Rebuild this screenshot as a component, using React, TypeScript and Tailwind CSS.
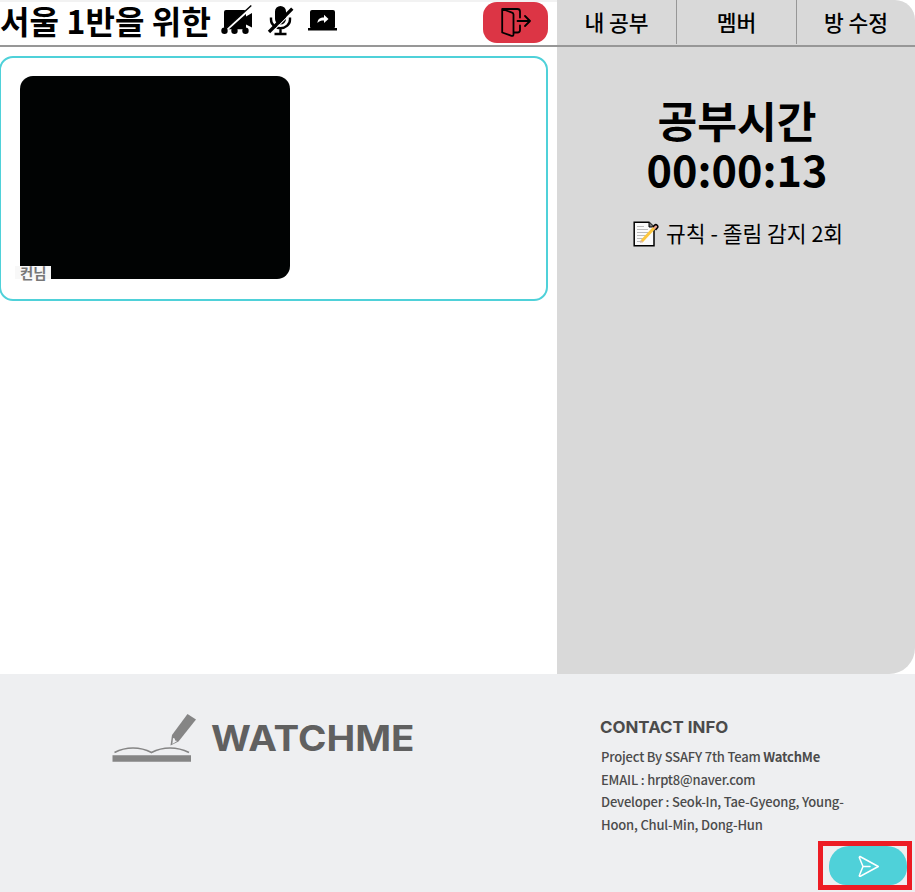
import React from "react";

function CameraOff() {
  return (
    <svg className="block h-[32px] w-[34px]" viewBox="0 0 34 32">
      <path d="M5 5h18Q25 5 25 7v4.500L31 8v14.500l-6-3v3q0 1.800-2 1.800H5Q3 24.300 3 22.300V7Q3 5 5 5Z" />
      <path d="M4 26 31 1.800" stroke="white" strokeWidth="2.600" />
      <path d="M3.500 25 30.300 .500" stroke="black" strokeWidth="1.400" />
      <circle cx="3.500" cy="25.700" r="3.200" />
      <circle cx="13.500" cy="25.700" r="3.200" />
      <circle cx="24.500" cy="25.700" r="3.200" />
    </svg>
  );
}

function MicOff() {
  return (
    <svg className="block h-[32px] w-[28px]" viewBox="0 0 28 32" fill="none" stroke="black">
      <path d="M13.500 1a5.500 5.500 0 0 1 5.500 5.500V14a5.500 5.500 0 0 1-11 0V6.500A5.500 5.500 0 0 1 13.500 1Z" fill="black" stroke="none" />
      <path d="M4 12.500v2c0 5 4.200 8.700 9.500 8.700s9.500-3.700 9.500-8.700v-2M13.500 23v5.500M7.500 29h12" strokeWidth="2.400" />
      <path d="M3.800 28.300 27.300 4.800" stroke="white" strokeWidth="1.200" />
      <path d="M2 27 25.300 3.700" strokeWidth="3.300" />
    </svg>
  );
}

function ShareScreen() {
  return (
    <svg className="block h-[21px] w-[29px]" viewBox="0 0 29 21">
      <path d="M4 0h21q2 0 2 2v15q0 1-1 1H3q-1 0-1-1V2Q2 0 4 0ZM0 18h29v2.500H0Z" />
      <path d="M9.500 13c.2-4 2.500-5.500 6.500-5.500V4.700l4.500 4.200-4.500 4V10.500c-3 0-4.800.600-6.500 2.500Z" fill="white" />
    </svg>
  );
}

function Door() {
  return (
    <svg className="block h-[30px] w-[30px]" viewBox="0 0 30 30" fill="none" stroke="black" strokeWidth="1.800" strokeLinejoin="round" strokeLinecap="round">
      <path d="M1.200 1v23.500l9.300 3.300q2 .600 2-1.500V6.500q0-1.400-1.400-1.900L1.200 1H16.500Q19 1 19 3.500v6M13 24.500h3.500q2.500 0 2.500-2.500V17.500M16.500 13h12.500M24 8l5 5-5 5" />
    </svg>
  );
}

function Memo() {
  return (
    <svg className="block h-[26px] w-[26px]" viewBox="0 0 26 26">
      <path d="M1.200 1.200H16L21 6v18.700H1.200Z" fill="#fafafa" stroke="black" strokeWidth="1.500" />
      <path d="M16 1v5h5" fill="#777" stroke="black" />
      <path d="M4 5.500h7M4 8.500h11M4 11.500h11M4 14.500h9M4 17.500h6M4 20.500h4" stroke="#bbb" />
      <path d="m8.500 20.500 13-14" stroke="#fcc63d" strokeWidth="3" />
      <path d="m7 22 1-3 2.200 2Z" fill="#d7b6a2" />
      <path d="m20 6 1.500-1.700q1.300-1.300 2.700 0t0 2.700L22.500 9" fill="#eaa08b" stroke="black" strokeWidth="1.500" />
    </svg>
  );
}

function BookLogo() {
  return (
    <svg className="block h-[50px] w-[86px]" viewBox="0 0 86 50">
      <path d="M.500 42.300h78.500V48.700H.500Z" fill="#858585" />
      <path d="M2.500 39.500C14 33.500 28 33.500 39.500 39.500 51 33.500 65 33.500 77 39.500" fill="none" stroke="#858585" strokeWidth="1.600" />
      <path d="M75.500 1 84 6.500 66.500 28.500 58.500 32.500 60 22Z" fill="#858585" />
      <path d="m61 25 1.700.400.500 2 2 .600-4.800 3Z" fill="#eeeff1" />
    </svg>
  );
}

const tabs = [
  { label: "내 공부", cell: "w-[120px] border-r border-[#979797]" },
  { label: "멤버", cell: "w-[120px] border-r border-[#979797]" },
  { label: "방 수정", cell: "w-[118px]" },
];

export default function App() {
  return (
    <div className="relative flex h-[892px] w-[915px] flex-col overflow-hidden bg-white font-['Noto_Sans_CJK_KR',sans-serif] text-black">
      <main className="flex h-[674px]">
        <section className="w-[557px]">
          <header className="flex h-[47px] items-start border-t-2 border-b-2 border-t-[#f2f2f2] border-b-[#979797]">
            <h1 className="mt-[-5px] w-[221px] text-[32px] leading-[46px] font-bold tracking-[0.1px] whitespace-nowrap">서울 1반을 위한</h1>
            <div className="mt-[3px]"><CameraOff /></div>
            <div className="mt-[3px] ml-[12px]"><MicOff /></div>
            <div className="mt-[8px] ml-[13px]"><ShareScreen /></div>
            <button className="ml-auto mr-[9px] flex h-[41px] w-[65px] items-center justify-center rounded-[14px] bg-[#dc3545]">
              <Door />
            </button>
          </header>
          <div className="mt-[9px] -ml-px h-[245px] w-[549px] rounded-[14px] border-2 border-[#4fd1d9] pt-[18px] pl-[19px]">
            <div className="flex h-[203px] w-[270px] items-end rounded-[13px] bg-[#010303]">
              <div className="-ml-[5px] h-[13px] w-[36px] bg-[#f8f8f8] pl-[5px] text-[14.400px] leading-[14px] font-bold whitespace-nowrap text-[#777]">컨님</div>
            </div>
          </div>
        </section>
        <aside className="w-[358px] rounded-tr-[20px] rounded-br-[26px] bg-[#d9d9d9]">
          <nav className="flex h-[47px] border-b-2 border-[#979797] pb-px">
            {tabs.map((tab) => (
              <button key={tab.label} className={`${tab.cell} text-[21.5px] leading-[44px] font-medium whitespace-nowrap`}>{tab.label}</button>
            ))}
          </nav>
          <div className="mt-[48px] pl-[2px] text-center text-[43.200px] leading-[49px] font-bold">
            <p>공부시간</p>
            <p>00:00:13</p>
          </div>
          <div className="mt-[27px] ml-[76px] flex items-center">
            <Memo />
            <p className="-mt-[2px] ml-[7px] text-[21.500px] leading-[30px] whitespace-nowrap">규칙 - 졸림 감지 2회</p>
          </div>
        </aside>
      </main>
      <footer className="flex h-[218px] bg-[#eeeff1] text-[#4b4b4b]">
        <div className="mt-[39px] ml-[112px] flex w-[488px]">
          <BookLogo />
          <h2 className="ml-[13px] h-[50px] origin-left scale-x-[1.1] font-['Inter'] text-[35px] leading-[50px] font-bold text-[#606060]">WATCHME</h2>
        </div>
        <div className="pt-[41px]">
          <h3 className="w-max origin-left scale-x-[1.055] font-['Inter'] text-[16px] leading-[24px] font-bold">CONTACT INFO</h3>
          <div className="mt-[7px] ml-px text-[13px] leading-[22.600px] font-medium tracking-[-0.19px] whitespace-nowrap">
            <p>Project By SSAFY 7th Team <b>WatchMe</b></p>
            <p>EMAIL : hrpt8@naver.com</p>
            <p>Developer : Seok-In, Tae-Gyeong, Young-</p>
            <p>Hoon, Chul-Min, Dong-Hun</p>
          </div>
        </div>
      </footer>
      <div className="absolute top-[841px] left-[818px] h-[49px] w-[94px] border-5 border-[#ed1c24] pl-[6px]">
        <button className="flex h-[39px] w-[78px] items-center justify-center rounded-t-[20px] rounded-b-[17px] bg-[#4fd1d9]">
          <svg className="h-[22px] w-[22px]" viewBox="0 0 22 22" fill="none" stroke="white" strokeWidth="1.500" strokeLinejoin="round" strokeLinecap="round">
            <path d="M3 1.500 21.300 11.500 3 21.500Q2 21 2.500 20L6 11.500 2.500 3Q2 2 3 1.500ZM6 11.500h7" />
          </svg>
        </button>
      </div>
    </div>
  );
}
